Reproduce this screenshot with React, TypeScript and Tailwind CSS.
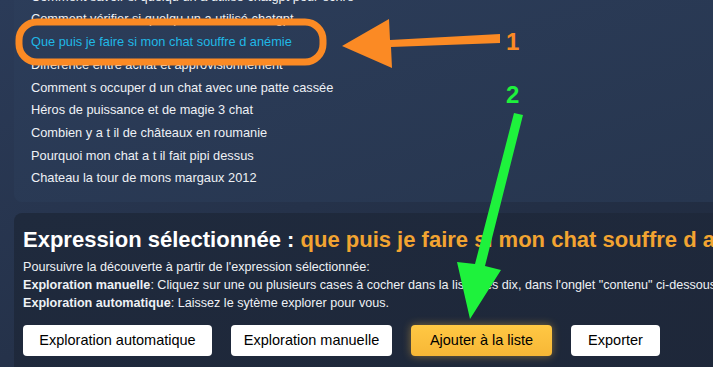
import React from "react";

const items = [
  "Comment savoir si quelqu un a utilisé chatgpt pour écrire",
  "Comment vérifier si quelqu un a utilisé chatgpt",
  "Que puis je faire si mon chat souffre d anémie",
  "Différence entre achat et approvisionnement",
  "Comment s occuper d un chat avec une patte cassée",
  "Héros de puissance et de magie 3 chat",
  "Combien y a t il de châteaux en roumanie",
  "Pourquoi mon chat a t il fait pipi dessus",
  "Chateau la tour de mons margaux 2012",
];

const buttons = [
  { label: "Exploration automatique", w: "w-[189px]", primary: false },
  { label: "Exploration manuelle", w: "w-[161px]", primary: false },
  { label: "Ajouter à la liste", w: "w-[141px]", primary: true },
  { label: "Exporter", w: "w-[89px]", primary: false },
];

function Annotations() {
  return (
    <svg
      className="pointer-events-none absolute inset-0"
      width={713}
      height={367}
      viewBox="0 0 713 367"
    >
      {/* orange highlight box */}
      <rect x={19} y={22} width={304} height={40} rx={18} fill="none" stroke="#fb8a24" strokeWidth={7} />
      {/* orange arrow */}
      <polygon points="500,34 500,43 391,47 392,68 342,46 389,19 390,40" fill="#fb8a24" />
      <text x={506} y={50} fill="#fb8a24" fontFamily="Liberation Sans, Arial, sans-serif" fontWeight={700} fontSize={24}>
        1
      </text>
      {/* green arrow */}
      <text x={506} y={103} fill="#1ef23c" fontFamily="Liberation Sans, Arial, sans-serif" fontWeight={700} fontSize={24}>
        2
      </text>
      <polygon points="514,113 523,115 485,266 501,270 470,319 457,262 475,264" fill="#1ef23c" />
    </svg>
  );
}

export default function App() {
  return (
    <div
      className="relative h-[367px] w-[713px] overflow-hidden bg-gradient-to-br from-[#2b3b58] to-[#1f293c] text-[#eef1f5]"
      style={{ fontFamily: '"Liberation Sans", Arial, sans-serif' }}
    >
      <div className="ml-[14px] -mt-[15px] rounded-bl-lg bg-gradient-to-br from-[#2c3d5a] to-[#27364f] pb-[13px] pl-[17px]">
        {items.map((it, i) => (
          <div
            key={i}
            className={`flex h-[22.7px] items-center whitespace-nowrap text-[12.8px] ${
              i === 2 ? "text-[#20b8e6]" : "text-[#eef1f5]"
            }`}
          >
            {it}
          </div>
        ))}
      </div>

      <div className="ml-[14px] mt-[11px] h-[200px] rounded-tl-lg bg-gradient-to-br from-[#1f2a3d] to-[#1e2739] pl-[9px] pt-[13px]">
        <div className="whitespace-nowrap text-[22px] font-bold leading-[28px]">
          <span className="text-white">Expression sélectionnée : </span>
          <span className="text-[#f2a431]">que puis je faire si mon chat souffre d anémie</span>
        </div>
        <div className="mt-[4px] whitespace-nowrap text-[12.6px] leading-[18px] text-[#eef1f5]">
          <div>Poursuivre la découverte à partir de l'expression sélectionnée:</div>
          <div>
            <b>Exploration manuelle</b>: Cliquez sur une ou plusieurs cases à cocher dans la liste des dix, dans l'onglet "contenu" ci-dessous.
          </div>
          <div>
            <b>Exploration automatique</b>: Laissez le sytème explorer pour vous.
          </div>
        </div>
        <div className="mt-[13px] flex gap-[19px]">
          {buttons.map((b) => (
            <button
              key={b.label}
              className={`h-[31px] ${b.w} rounded-[4px] text-[14.5px] text-black ${
                b.primary
                  ? "bg-gradient-to-b from-[#ffc844] to-[#f7b736] shadow-[0_0_8px_rgba(255,190,60,0.45)]"
                  : "bg-white"
              }`}
            >
              {b.label}
            </button>
          ))}
        </div>
      </div>

      <Annotations />
    </div>
  );
}
